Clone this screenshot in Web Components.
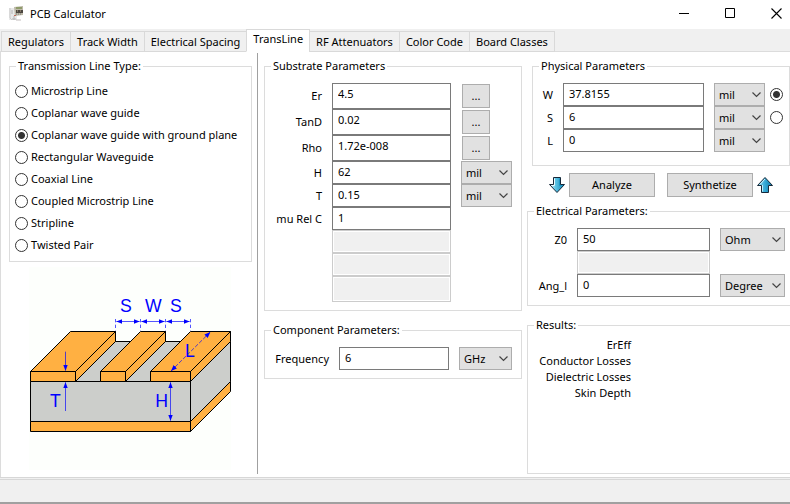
<!DOCTYPE html>
<html lang="en">
<head>
<meta charset="utf-8">
<title>PCB Calculator</title>
<style>
  html, body { margin: 0; height: 100%; }
  body {
    font: 11px/16px "Noto Sans", "Open Sans", sans-serif;
    color: #000;
    background: #fff;
    --line: #dcdcdc;
    --face: #f0f0f0;
    --button: #e1e1e1;
    --button-line: #adadad;
  }
</style>
</head>
<body>
<calc-window>
  <title-bar slot="title">PCB Calculator</title-bar>
  <tab-strip slot="tabs" selected="TransLine"></tab-strip>
  <group-box slot="types" label="Transmission Line Type:"><line-types></line-types></group-box>
  <line-diagram slot="types"></line-diagram>
  <group-box slot="substrate" label="Substrate Parameters"><param-table set="substrate"></param-table></group-box>
  <group-box slot="substrate" label="Component Parameters:"><param-table set="component"></param-table></group-box>
  <group-box slot="results" class="inset" label="Physical Parameters"><param-table set="physical"></param-table></group-box>
  <calc-actions slot="results"></calc-actions>
  <group-box slot="results" class="open" label="Electrical Parameters:"><param-table set="electrical"></param-table></group-box>
  <group-box slot="results" class="open fill" label="Results:"><result-list></result-list></group-box>
</calc-window>

<script>
const define = (name, html, setup) => {
  const template = document.createElement('template');
  template.innerHTML = html;
  customElements.define(name, class extends HTMLElement {
    connectedCallback() {
      if (this.shadowRoot) return;
      const root = this.attachShadow({ mode: 'open' });
      root.append(template.content.cloneNode(true));
      if (setup) setup(root, this);
    }
  });
};

const RADIO_CSS = `
  input[type=radio] {
    appearance: none; box-sizing: border-box; flex: none;
    width: 13px; height: 13px; margin: 0;
    border: 1px solid #333; border-radius: 50%; background: #fff;
  }
  input[type=radio]:checked { background: radial-gradient(circle, #333 0 3px, #fff 4px); }
`;

define('calc-window', `
  <style>
    :host { display: flex; flex-direction: column; min-height: 100vh; }
    main { flex: 1; display: grid; border-left: 1px solid var(--line);
      grid-template-columns: minmax(0, 256fr) 1px minmax(0, 532fr); }
    .types { padding: 6px 5px 0 8px; }
    .split { margin: 1px 0 3px; background: #a0a0a0; }
    .right { display: grid; grid-template-columns: minmax(0, 258fr) minmax(0, 263fr);
      column-gap: 5px; padding: 6px 0 3px 6px; }
    .col { display: flex; flex-direction: column; min-width: 0; gap: 11px; }
    .col.tight { gap: 0; }
    .tight ::slotted(.inset) { margin-left: 5px; }
    .tight ::slotted(.fill) { flex: 1; margin-top: 11px; }
    footer { flex: none; height: 22px; background: var(--face);
      border-top: 3px double #d7d7d7; border-bottom: 2px solid #a0a0a0; }
  </style>
  <slot name="title"></slot>
  <slot name="tabs"></slot>
  <main>
    <div class="types"><slot name="types"></slot></div>
    <div class="split"></div>
    <div class="right">
      <div class="col"><slot name="substrate"></slot></div>
      <div class="col tight"><slot name="results"></slot></div>
    </div>
  </main>
  <footer></footer>
`);

define('title-bar', `
  <style>
    :host { display: flex; align-items: center; height: 29px; padding: 0 0 2px 9px; box-sizing: border-box; background: #fff; }
    h1 { font: inherit; flex: 1; margin: 0 0 0 6px; }
    nav { display: flex; gap: 18px; }
    button { width: 28px; height: 24px; padding: 0; border: 0; background: none; display: grid; place-items: center; }
    svg { display: block; }
  </style>
  <svg width="15" height="15" viewBox="0 0 15 15">
    <path d="M0 2h8v12H0z" fill="#e9e9e9"/><path d="M1 2v10l2 2" fill="none" stroke="#c9c9c9"/>
    <path d="M3 4v4M5 10v4M3 13h4" stroke="#b4b4b4"/><path d="M7 14h5" stroke="#c4bdbd"/>
    <path d="M5 1l9-1v9l-8 1z" fill="#bdb9a8"/><path d="M7 1h6v2H7z" fill="#8f9b6a"/>
    <path d="M7 4h7v3H7z" fill="#4c463f"/><path d="M8 5h1M11 5h1" stroke="#b8a78c"/><path d="M7 8h6" stroke="#777" stroke-dasharray="1 1"/>
    <path d="M5 9h2v1H5z" fill="#c26b5c"/>
  </svg>
  <h1><slot></slot></h1>
  <nav>
    <button aria-label="Minimize"><svg width="11" height="11"><path d="M0 5.5h10" stroke="#000"/></svg></button>
    <button aria-label="Maximize"><svg width="11" height="11"><path d="M.5.5h9v9h-9z" fill="none" stroke="#000"/></svg></button>
    <button aria-label="Close"><svg width="11" height="11"><path d="M.5.5l10 10M10.5.5l-10 10" stroke="#000" stroke-width="1.1"/></svg></button>
  </nav>
`);

define('tab-strip', `
  <style>
    :host { display: flex; align-items: flex-end; height: 23px; padding-left: 2px; box-sizing: border-box;
      background: var(--face); box-shadow: inset 0 -1px var(--line); }
    button { font: inherit; color: inherit; height: 21px; padding: 0 6px; margin: 0 0 0 -1px;
      border: 1px solid #d9d9d9; background: var(--face); white-space: nowrap; }
    button:first-child { margin-left: 0; }
    button[aria-selected=true] { height: 23px; padding-bottom: 4px; background: #fff; border-bottom-color: #fff; }
  </style>
`, (root, host) => {
  host.setAttribute('role', 'tablist');
  for (const name of ['Regulators', 'Track Width', 'Electrical Spacing', 'TransLine', 'RF Attenuators', 'Color Code', 'Board Classes']) {
    const b = document.createElement('button');
    b.role = 'tab';
    b.textContent = name;
    b.setAttribute('aria-selected', name === host.getAttribute('selected'));
    root.append(b);
  }
});

define('group-box', `
  <style>
    :host { display: flex; }
    fieldset { flex: 1; min-width: 0; margin: 0; padding: 0; border: 1px solid var(--line); box-sizing: border-box; }
    :host(.open) fieldset { border-right: 0; }
    legend { margin-left: 6px; padding: 0 2px; height: 16px; }
  </style>
  <fieldset><legend></legend><slot></slot></fieldset>
`, (root, host) => { root.querySelector('legend').textContent = host.getAttribute('label'); });

define('line-types', `
  <style>
    :host { display: block; padding: 6px 5px 5px; }
    label { display: flex; align-items: center; gap: 3px; height: 22px; white-space: nowrap; }
    ${RADIO_CSS}
  </style>
`, root => {
  for (const name of ['Microstrip Line', 'Coplanar wave guide', 'Coplanar wave guide with ground plane', 'Rectangular Waveguide',
                      'Coaxial Line', 'Coupled Microstrip Line', 'Stripline', 'Twisted Pair']) {
    const label = document.createElement('label');
    label.innerHTML = `<input type="radio" name="type"><span>${name}</span>`;
    label.firstChild.checked = name === 'Coplanar wave guide with ground plane';
    root.append(label);
  }
});

define('line-diagram', `
  <style>
    :host { display: block; padding: 5px 0 0 20px; }
    svg { display: block; background: #fdfffc; }
    .o { fill: #ffb042; } .g { fill: #cccecb; }
    .o, .g { stroke: #000; stroke-width: 3; stroke-linejoin: round; }
    .b { stroke: #00f; stroke-width: 2; fill: none; }
    .two { marker-start: url(#a); marker-end: url(#a); }
    .one { marker-end: url(#a); }
    text { font: 53px "Liberation Sans", sans-serif; fill: #00f; text-anchor: middle; }
  </style>
  <svg width="202" height="203" viewBox="27 6 606 609" role="img" aria-label="Coplanar wave guide with ground plane">
    <defs>
      <marker id="a" markerUnits="userSpaceOnUse" markerWidth="20" markerHeight="14" refX="18" refY="7" orient="auto-start-reverse"><path d="M0 0l18 7-18 7z" fill="#00f"/></marker>
    </defs>
    <path class="g" d="M31.5 349.5l120-120h480l-120 120z"/>
    <path class="g" d="M31.5 349.5h480v120h-480zM511.5 349.5l120-120v120l-120 120z"/>
    <path class="o" d="M31.5 469.5h480v30h-480zM511.5 469.5l120-120v30l-120 120z"/>
    <path class="o" d="M31.5 319.5l120-120h135l-120 120zM31.5 319.5h135v30h-135zM166.5 319.5l120-120v30l-120 120z"/>
    <path class="o" d="M241.5 319.5l120-120h75l-120 120zM241.5 319.5h75v30h-75zM316.5 319.5l120-120v30l-120 120z"/>
    <path class="o" d="M391.5 319.5l120-120h120l-120 120zM391.5 319.5h120v30h-120zM511.5 319.5l120-120v30l-120 120z"/>
    <path class="b" stroke-dasharray="10 7" d="M286.5 162v35M361.5 162v35M436.5 162v35M511.5 162v35"/>
    <path class="b two" d="M289 169.5h70"/>
    <path class="b two" d="M364 169.5h70"/>
    <path class="b two" d="M439 169.5h70"/>
    <path class="b two" d="M451.5 352v115"/>
    <path class="b two" stroke-dasharray="12 5" d="M453 318l118-117"/>
    <path class="b one" d="M136.5 260v57"/>
    <path class="b one" d="M136.5 438v-86"/>
    <text x="318" y="141">S</text><text x="400" y="141">W</text><text x="468" y="141">S</text>
    <text x="510" y="277">L</text><text x="106" y="426">T</text><text x="425" y="426">H</text>
  </svg>
`);

const SETS = {
  substrate: { cols: '48px 1fr 51px', rows: [
    ['Er', '4.5', '...'], ['TanD', '0.02', '...'], ['Rho', '1.72e-008', '...'],
    ['H', '62', 'mil'], ['T', '0.15', 'mil'], ['mu Rel C', '1'], [], [], ['', null, '', 'tall']] },
  component: { cols: '55px 1fr 53px', rows: [['Frequency', '6', 'GHz']] },
  physical: { cols: '11px 1fr 51px 8px', pick: 'W', rows: [['W', '37.8155', 'mil'], ['S', '6', 'mil'], ['L', '0', 'mil']] },
  electrical: { cols: '30px 1fr 65px', rows: [['Z0', '50', 'Ohm'], [], ['Ang_l', '0', 'Degree']] },
};

define('param-table', `
  <style>
    :host { display: block; padding: 9px 9px 8px; }
    :host([set=physical]) { padding: 9px 6px 13px 9px; }
    :host([set=electrical]) { padding-right: 5px; }
    .row { display: grid; column-gap: 10px; height: 23px; }
    .row.tall { height: 26px; }
    .row > label { align-self: center; justify-self: end; white-space: nowrap; }
    .field { font: inherit; color: inherit; box-sizing: border-box; width: 100%; min-width: 0; height: 100%;
      margin: 0; padding: 0 5px 2px; border: 1px solid #7a7a7a; border-radius: 0; background: #fff; }
    .tall .field { padding-bottom: 5px; }
    .field:disabled { border-color: #ccc; background: var(--face); box-shadow: inset 0 0 0 1px #fff; }
    .pick { display: grid; }
    .pick > * { grid-area: 1 / 1; }
    select { appearance: none; font: inherit; color: inherit; box-sizing: border-box; width: 100%; height: 100%; margin: 0;
      padding: 1px 0 0 4px; border: 1px solid var(--button-line); border-radius: 0; background: var(--button); }
    .pick svg { align-self: center; justify-self: end; margin-right: 4px; pointer-events: none; }
    button { font: inherit; color: inherit; width: 28px; height: 24px; margin: 1px 0 0 1px; padding: 0;
      border: 1px solid var(--button-line); background: var(--button); }
    ${RADIO_CSS}
    input[type=radio] { align-self: center; justify-self: end; }
  </style>
`, (root, host) => {
  const set = SETS[host.getAttribute('set')];
  set.rows.forEach(([label = '', value, unit, tall], i) => {
    const row = document.createElement('div');
    const more = unit === '...';
    row.className = more || tall ? 'row tall' : 'row';
    row.style.gridTemplateColumns = set.cols;
    row.innerHTML =
      (label ? `<label for="f${i}">${label}</label>` : '<span></span>') +
      `<input class="field" id="f${i}" type="text" ${value != null ? `value="${value}"` : 'disabled aria-label="Unused"'}>` +
      (more ? `<button aria-label="Choose ${label}">...</button>` : unit ?
        `<div class="pick"><select aria-label="${label} unit"><option>${unit}</option></select>
         <svg width="9" height="6" viewBox="0 0 9 6"><path d="M.5.5l4 4 4-4" fill="none" stroke="#444" stroke-width="1.2"/></svg></div>` : '') +
      (set.pick && i < 2 ? `<input type="radio" name="solve" aria-label="Solve for ${label}" ${label === set.pick ? 'checked' : ''}>` : '');
    root.append(row);
  });
});

define('calc-actions', `
  <style>
    :host { display: flex; align-items: center; gap: 3px; padding: 7px 16px 6px 21px; }
    button { font: inherit; color: inherit; flex: 1 1 86px; max-width: 86px; height: 24px; padding: 0;
      border: 1px solid var(--button-line); background: var(--button); }
    button + button { margin-left: 9px; }
    svg { flex: none; display: block; }
  </style>
  <svg width="18" height="18" viewBox="0 0 18 18">
    <defs><linearGradient id="d" x1="0" x2="1"><stop offset="0" stop-color="#e8f8fd"/><stop offset=".4" stop-color="#5fc6e6"/><stop offset="1" stop-color="#0b83b5"/></linearGradient></defs>
    <path d="M5.5 1.5h7v7h4l-7.5 8-7.5-8h4z" fill="url(#d)" stroke="#16293a"/>
    <path d="M3.5 9.5h3v-7" fill="none" stroke="#eafaff"/><path d="M11.5 2.5v7h3" fill="none" stroke="#1a95c4"/>
  </svg>
  <button>Analyze</button>
  <button>Synthetize</button>
  <svg width="18" height="18" viewBox="0 0 18 18">
    <defs><linearGradient id="u" x1="0" x2="1"><stop offset="0" stop-color="#8fdcf2"/><stop offset=".5" stop-color="#35a9d6"/><stop offset="1" stop-color="#0874a5"/></linearGradient></defs>
    <path d="M5.5 16.5h7v-7h4l-7.5-8-7.5 8h4z" fill="url(#u)" stroke="#16293a"/>
    <path d="M4 8.5l5-5.5" fill="none" stroke="#d5f4fd"/><path d="M6.5 9v6.5" fill="none" stroke="#c2ecf9"/>
  </svg>
`);

define('result-list', `
  <style>
    :host { display: block; padding: 4px 9px; }
    ul { list-style: none; margin: 0; padding: 0; width: 94px; text-align: right; }
  </style>
  <ul><li>ErEff</li><li>Conductor Losses</li><li>Dielectric Losses</li><li>Skin Depth</li></ul>
`);
</script>
</body>
</html>
